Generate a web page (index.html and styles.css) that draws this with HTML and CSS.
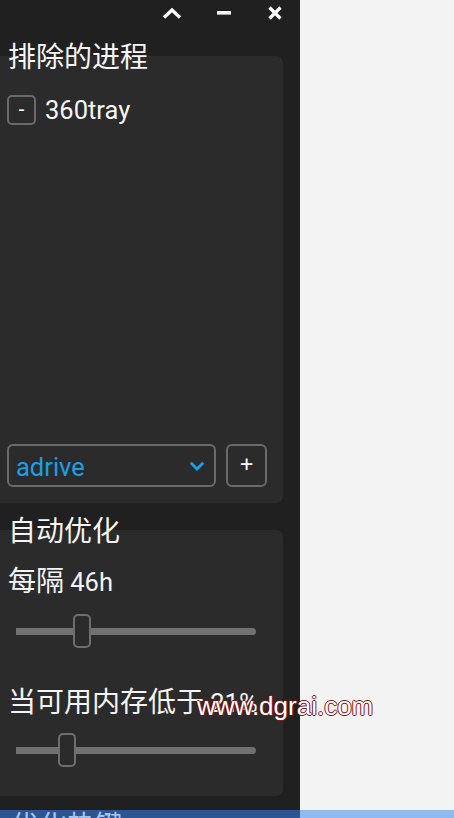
FILE: index.html
```html
<!DOCTYPE html>
<html lang="zh-CN">
<head>
<meta charset="utf-8">
<title>排除的进程</title>
<link rel="stylesheet" href="styles.css">
</head>
<body>
<div class="app">
  <div class="pane">
    <div class="titlebar">
      <button class="tb-btn" aria-label="collapse">
        <svg width="20" height="12" viewBox="0 0 20 12"><polyline points="2,10.5 10,3 18,10.5" fill="none" stroke="#fff" stroke-width="3.4"/></svg>
      </button>
      <button class="tb-btn" aria-label="minimize">
        <svg width="16" height="6" viewBox="0 0 16 6"><rect x="1" y="1" width="14" height="3.6" fill="#fff"/></svg>
      </button>
      <button class="tb-btn tb-last" aria-label="close">
        <svg width="14" height="14" viewBox="0 0 14 14"><path d="M1.5 1.5 L12.5 12.5 M12.5 1.5 L1.5 12.5" fill="none" stroke="#fff" stroke-width="3.2"/></svg>
      </button>
    </div>

    <h2 class="section-title">排除的进程</h2>
    <section class="card card-exclude">
      <ul class="proc-list">
        <li class="proc"><button class="mini-btn">-</button><span class="proc-name">360tray</span></li>
      </ul>
      <div class="add-row">
        <div class="select">
          <span class="select-value">adrive</span>
          <svg class="select-arrow" width="16" height="10" viewBox="0 0 16 10"><polyline points="1.8,1.8 8,8 14.2,1.8" fill="none" stroke="#1a9fe6" stroke-width="2.8"/></svg>
        </div>
        <button class="add-btn">+</button>
      </div>
    </section>

    <h2 class="section-title">自动优化</h2>
    <section class="card card-auto">
      <div class="label">每隔 <span class="latin">46h</span></div>
      <div class="slider"><div class="track"></div><div class="thumb" style="left:57px"></div></div>
      <div class="label label-gap">当可用内存低于 <span class="latin">21%</span></div>
      <div class="slider slider-second"><div class="track"></div><div class="thumb" style="left:42px"></div></div>
    </section>
  </div>
  <div class="side"></div>
  <div class="footer-left"><span class="footer-text">优化热键</span></div>
  <div class="footer-right"></div>
  <div class="watermark">www.dgrai.com</div>
</div>
</body>
</html>
```

FILE: styles.css
```css
html, body {
  margin: 0;
  padding: 0;
  background: #f3f3f3;
}

body {
  font-family: "Noto Sans CJK SC", "Noto Sans", sans-serif;
  color: #f4f4f4;
  overflow: hidden;
}

.app {
  position: relative;
  display: grid;
  grid-template-columns: 300px 1fr;
  grid-template-rows: 810px 8px;
  width: 454px;
  height: 818px;
  overflow: hidden;
}

.pane {
  background: #202020;
  display: flex;
  flex-direction: column;
  overflow: hidden;
}

.side {
  background: #f3f3f3;
}

.titlebar {
  height: 38px;
  display: flex;
  justify-content: flex-end;
  align-items: flex-start;
  flex-shrink: 0;
}

.tb-btn {
  width: 52px;
  height: 26px;
  padding: 0;
  border: 0;
  background: transparent;
  display: flex;
  align-items: center;
  justify-content: center;
}

.tb-last {
  width: 50px;
}

.section-title {
  position: relative;
  z-index: 1;
  margin: 0 0 -16px 0;
  padding-left: 8px;
  font-size: 28px;
  line-height: 34px;
  font-weight: normal;
  color: #f6f6f6;
  flex-shrink: 0;
}

.card {
  background: #2b2b2b;
  width: 283px;
  border-radius: 0 7px 7px 0;
  box-sizing: border-box;
  flex-shrink: 0;
}

.card-exclude {
  height: 447px;
  display: flex;
  flex-direction: column;
  padding: 39px 16px 16px 7px;
  margin-bottom: 9px;
}

.proc-list {
  list-style: none;
  margin: 0;
  padding: 0;
}

.proc {
  display: flex;
  align-items: center;
  gap: 9px;
  height: 30px;
}

.mini-btn {
  width: 29px;
  height: 30px;
  box-sizing: border-box;
  border: 2px solid #6a6a6a;
  border-radius: 5px;
  background: transparent;
  color: #fff;
  font-family: "Noto Sans", sans-serif;
  font-size: 20px;
  line-height: 22px;
  padding: 0 0 3px 0;
}

.proc-name {
  font-family: Roboto, "Noto Sans", sans-serif;
  font-size: 25.5px;
  line-height: 30px;
  color: #f6f6f6;
}

.add-row {
  margin-top: auto;
  display: flex;
  gap: 10px;
}

.select {
  width: 209px;
  height: 43px;
  box-sizing: border-box;
  border: 2px solid #6a6a6a;
  border-radius: 6px;
  display: flex;
  align-items: center;
  justify-content: space-between;
  padding: 2px 9px 0 7px;
}

.select-value {
  font-family: Roboto, "Noto Sans", sans-serif;
  color: #1a9fe6;
  font-size: 25.5px;
  line-height: 34px;
}

.select-arrow {
  margin-top: -2px;
}

.add-btn {
  width: 41px;
  height: 43px;
  box-sizing: border-box;
  border: 2px solid #6a6a6a;
  border-radius: 6px;
  background: transparent;
  color: #fff;
  font-family: "Noto Sans", sans-serif;
  font-size: 24px;
  line-height: 24px;
  padding: 0 0 3px 0;
}

.card-auto {
  padding: 32px 0 29px 0;
}

.label {
  padding-left: 8px;
  height: 34px;
  font-size: 28px;
  line-height: 34px;
  color: #f4f4f4;
}

.latin {
  font-family: Roboto, "Noto Sans", sans-serif;
  font-size: 25.5px;
  line-height: 20px;
}

.label-gap {
  margin-top: 35px;
}

.slider {
  position: relative;
  margin: 18px 0 0 16px;
  width: 240px;
  height: 34px;
  display: flex;
  align-items: center;
}

.slider-second {
  margin-top: 16px;
}

.track {
  width: 240px;
  height: 7px;
  background: #717171;
  border-radius: 0 4px 4px 0;
}

.thumb {
  position: absolute;
  top: 0;
  width: 18px;
  height: 34px;
  box-sizing: border-box;
  border: 2px solid #6e6e6e;
  border-radius: 5px;
  background: #2b2b2b;
}

.footer-left {
  background: #2b5593;
  overflow: hidden;
  position: relative;
}

.footer-text {
  display: block;
  padding-left: 11px;
  margin-top: -3px;
  font-size: 28px;
  line-height: 34px;
  color: #a8c4ee;
}

.footer-right {
  background: #8fb9f1;
}

.watermark {
  position: absolute;
  left: 197px;
  top: 693px;
  font-family: "Liberation Sans", sans-serif;
  font-size: 26px;
  line-height: 26px;
  color: #fff;
  text-shadow: 1px 0 0 #7d1414, -1px 0 0 #7d1414, 0 1px 0 #7d1414, 0 -1px 0 #7d1414;
}
```
